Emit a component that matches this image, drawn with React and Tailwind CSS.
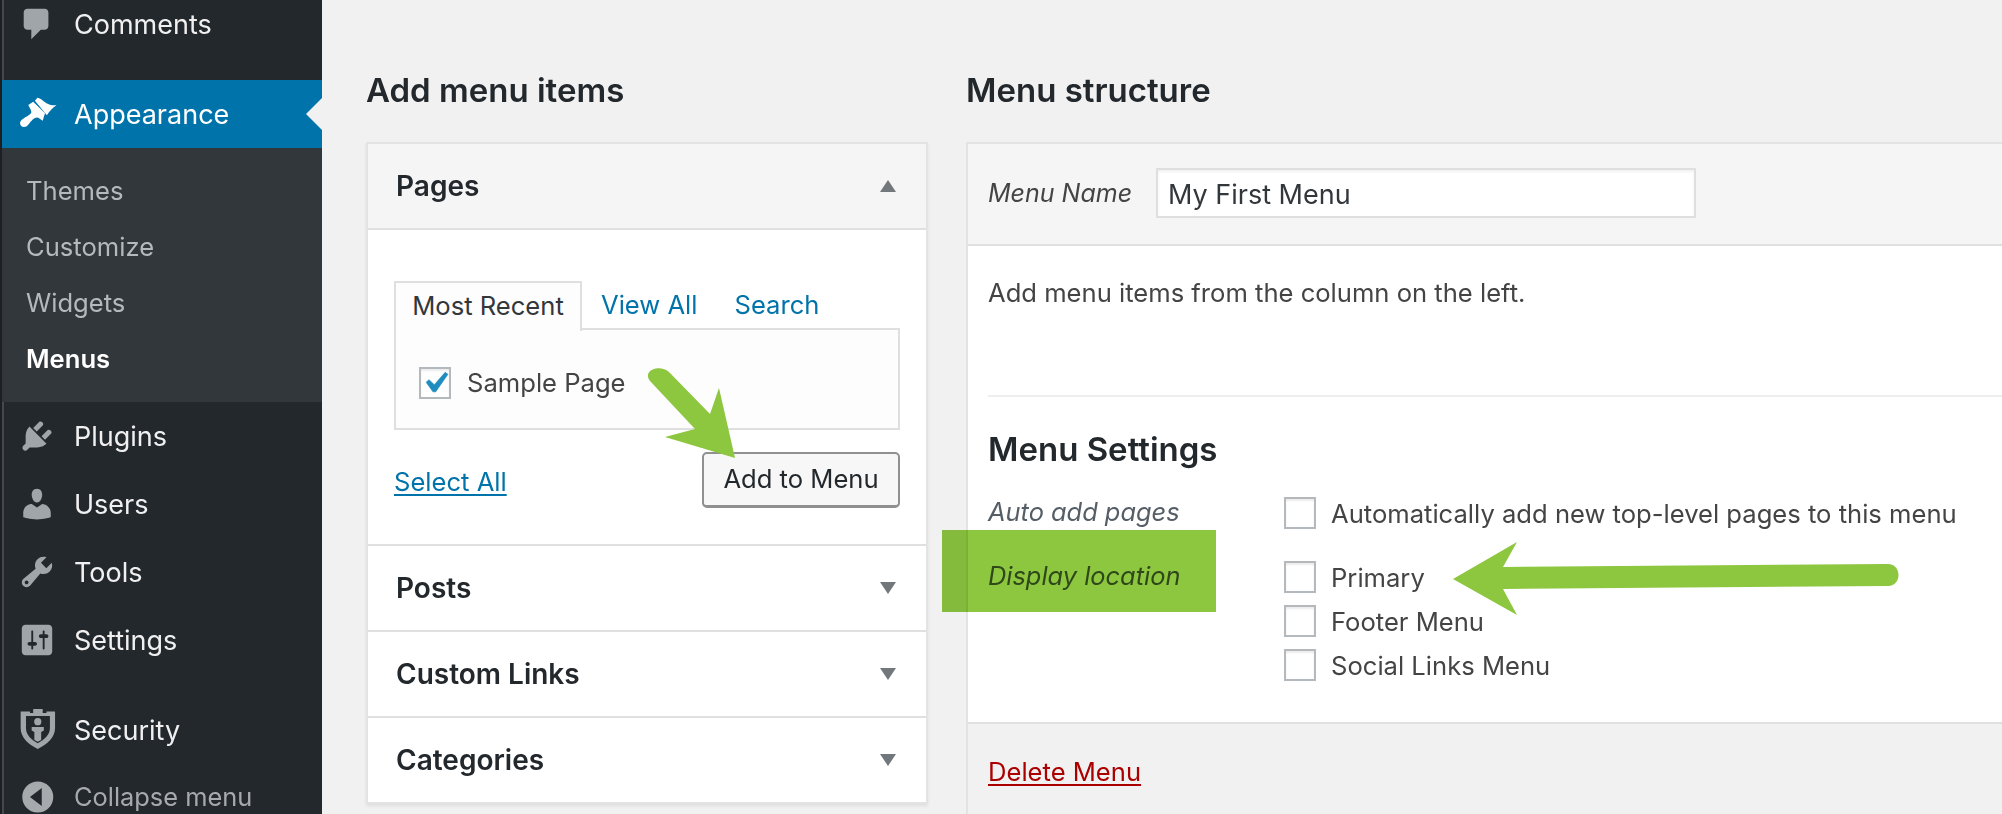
const font = "font-['Inter',sans-serif]";

const icons = {
  comments: "M5 2h9c1.1 0 2 .9 2 2v7c0 1.1-.9 2-2 2h-2l-5 5v-5H5c-1.1 0-2-.9-2-2V4c0-1.1.9-2 2-2z",
  appearance: "M5.4 5.3L8 3.5L14.2 9.6L13 13.5C11.5 12.5 11 11.8 10 11.8C8.5 11.8 7 13.5 5.5 15.5C4.5 17 2.5 17.2 1.6 16.2C.7 15.2 1 13.8 2.3 12.8C4 11.5 6.5 10.5 7 9.2C7.2 8.3 6.2 7 5.4 5.3ZM8.9 3L10.2 1.5C12 1.6 13 3.3 15 4.3C17 5.3 18.5 5.6 20.3 5.4C18.5 6.5 16.5 8.5 15.2 10.6Z",
  plugins: "M13.11 4.36L9.87 7.6 8 5.73l3.24-3.24c.35-.34 1.05-.2 1.56.32.52.51.66 1.21.31 1.55zm-8 1.77l.91-1.12 9.01 9.01-1.19.84c-.71.71-2.63 1.16-3.82 1.16H6.14L4.9 17.26c-.59.59-1.54.59-2.12 0-.59-.58-.59-1.53 0-2.12l1.24-1.24v-3.88c0-1.13.4-3.19 1.09-3.89zm7.26 3.97l3.24-3.24c.34-.35 1.04-.21 1.55.31.52.51.66 1.21.31 1.55l-3.24 3.25z",
  users: "M10 9.25c-2.27 0-2.73-3.44-2.73-3.44C7 4.02 7.82 2 9.97 2c2.16 0 2.98 2.02 2.71 3.81 0 0-.41 3.44-2.68 3.44zm0 2.57L12.72 10c2.39 0 4.52 2.33 4.52 4.53v2.49s-3.65 1.13-7.24 1.13c-3.65 0-7.24-1.13-7.24-1.13v-2.49c0-2.25 1.94-4.48 4.47-4.48z",
  tools: "M16.68 9.77c-1.34 1.34-3.3 1.67-4.95.99l-5.41 6.52c-.99.99-2.59.99-3.58 0s-.99-2.59 0-3.57l6.52-5.42c-.68-1.65-.35-3.61.99-4.95 1.28-1.28 3.12-1.62 4.72-1.06l-2.89 2.89 2.82 2.82 2.86-2.87c.53 1.58.18 3.39-1.08 4.65zM3.81 16.21c.4.39 1.04.39 1.43 0 .4-.4.4-1.04 0-1.43-.39-.4-1.03-.4-1.43 0-.39.39-.39 1.03 0 1.43z",
  settings: "M18 16V4c0-1.1-.9-2-2-2H4c-1.1 0-2 .9-2 2v12c0 1.1.9 2 2 2h12c1.1 0 2-.9 2-2zM8 11h1c.55 0 1 .45 1 1s-.45 1-1 1H8v1.5c0 .28-.22.5-.5.5s-.5-.22-.5-.5V13H6c-.55 0-1-.45-1-1s.45-1 1-1h1V5.5c0-.28.22-.5.5-.5s.5.22.5.5V11zm5-2h-1c-.55 0-1-.45-1-1s.45-1 1-1h1V5.5c0-.28.22-.5.5-.5s.5.22.5.5V7h1c.55 0 1 .45 1 1s-.45 1-1 1h-1v5.5c0 .28-.22.5-.5.5s-.5-.22-.5-.5V9z",
  security: "M1.4 .2H6.3V1.1H8V-1H13V1.1H15V.2H19.5V9C19.5 14 15.5 17.5 10.4 20C5.3 17.5 1.4 14 1.4 9ZM4.2 2.6H16.8V9C16.8 12.5 14 15 10.4 17C6.8 15 4.2 12.5 4.2 9ZM10.4 3.7a1.9 1.9 0 1 1 0 3.8a1.9 1.9 0 0 1 0-3.8ZM7.2 8.4H13.6V10.2L12.2 11V15.2L10.4 16.2L8.6 15.2V11L7.2 10.2Z",
  collapse: "M10.4 1.84a8.16 8.16 0 1 0 0 16.32a8.16 8.16 0 0 0 0-16.32ZM12.5 5.3V14.7L6.3 10Z",
};

const MenuIcon = ({ name, className }) => (
  <svg viewBox="0 0 20 20" className={`overflow-visible ${className}`} fill="currentColor" fillRule="evenodd">
    <path d={icons[name]} />
  </svg>
);

const MenuRow = ({ icon, label }) => (
  <div className="flex h-[68px] shrink-0 items-center pl-[16px] text-[#f0f0f1]">
    <MenuIcon name={icon} className="h-[38px] w-[38px] shrink-0 text-[#a0a5aa]" />
    <span className="ml-[18px] pt-[2px] text-[27px]">{label}</span>
  </div>
);

const Sidebar = () => (
  <aside className="flex h-[814px] w-[322px] shrink-0 flex-col overflow-hidden border-l-[2px] border-[#1e1f22] bg-[#23282d] shadow-[inset_2px_0_0_#45494e]">
    <div className="-mt-[10px] mb-[22px]">
      <MenuRow icon="comments" label="Comments" />
    </div>
    <div className="relative flex h-[68px] shrink-0 items-center bg-[#0073aa] pl-[16px] text-white">
      <MenuIcon name="appearance" className="h-[38px] w-[38px] shrink-0" />
      <span className="ml-[18px] pt-[2px] text-[27px]">Appearance</span>
      <div className="absolute right-0 top-[18px] h-0 w-0 border-y-[16px] border-r-[16px] border-y-transparent border-r-[#f1f1f1]" />
    </div>
    <div className="flex flex-col bg-[#32373c] py-[15px] pl-[24px] text-[25.6px] text-[#b4b9be]">
      <div className="flex h-[56px] items-center">Themes</div>
      <div className="flex h-[56px] items-center">Customize</div>
      <div className="flex h-[56px] items-center">Widgets</div>
      <div className="flex h-[56px] items-center font-semibold text-white">Menus</div>
    </div>
    <MenuRow icon="plugins" label="Plugins" />
    <MenuRow icon="users" label="Users" />
    <MenuRow icon="tools" label="Tools" />
    <MenuRow icon="settings" label="Settings" />
    <div className="mt-[22px]">
      <MenuRow icon="security" label="Security" />
    </div>
    <div className="-mt-px flex h-[68px] shrink-0 items-center pl-[16px] text-[#a7aaad]">
      <MenuIcon name="collapse" className="h-[38px] w-[38px] shrink-0" />
      <span className="ml-[18px] text-[25.4px]">Collapse menu</span>
    </div>
  </aside>
);

const Caret = ({ up }) => (
  <div className={`h-0 w-0 border-x-[8px] border-x-transparent ${up ? 'border-b-[12px] border-b-[#72777c]' : 'border-t-[12px] border-t-[#72777c]'}`} />
);

const Accordion = ({ title }) => (
  <div className="flex h-[86px] items-center justify-between border-t-2 border-[#e0e0e0] pl-[28px] pr-[30px]">
    <h3 className="text-[28px] font-semibold text-[#23282d]">{title}</h3>
    <Caret />
  </div>
);

const Checkbox = ({ checked }) => (
  <div className="relative flex h-[32px] w-[32px] shrink-0 items-center justify-center border-2 border-[#b4b9be] bg-white shadow-[inset_0_2px_2px_rgba(0,0,0,0.08)]">
    {checked && (
      <svg viewBox="0 0 20 20" className="h-[42px] w-[42px] shrink-0 text-[#1e8cbe]" fill="currentColor" stroke="currentColor" strokeWidth="0.3">
        <path d="M14.83 4.89l1.34.94-5.81 8.38H9.02L5.78 9.67l1.34-1.25 2.57 2.4z" />
      </svg>
    )}
  </div>
);

const AddItems = () => (
  <section className="w-[562px] shrink-0">
    <h2 className="mb-[34px] mt-[72px] h-[36px] text-[33px] font-semibold leading-[36px] text-[#23282d]">Add menu items</h2>
    <div className="border-2 border-[#e3e3e3] bg-white shadow-[0_2px_3px_rgba(0,0,0,0.08)]">
      <div className="flex h-[84px] items-center justify-between bg-[#f5f5f5] pl-[28px] pr-[30px]">
        <h3 className="text-[28px] font-semibold text-[#23282d]">Pages</h3>
        <Caret up />
      </div>
      <div className="h-[316px] border-t-2 border-[#e0e0e0] pl-[26px] pr-[26px] pt-[50px]">
        <div className="flex h-[50px] items-center text-[25.6px]">
          <div className="relative z-10 -mb-px flex h-[50px] w-[188px] items-center justify-center border-2 border-b-0 border-[#dfdfdf] bg-[#fdfdfd] text-[#32373c]">Most Recent</div>
          <a className="ml-[19px] text-[#0073aa]">View All</a>
          <a className="ml-[37px] text-[#0073aa]">Search</a>
        </div>
        <div className="-mt-[2px] flex h-[102px] items-center gap-[16px] border-2 border-[#dfdfdf] bg-[#fdfdfd] pl-[23px] pt-[8px] text-[25.6px] text-[#444]">
          <Checkbox checked />
          Sample Page
        </div>
        <div className="mt-[22px] flex items-center justify-between">
          <a className="pt-[4px] text-[25.6px] text-[#0073aa] underline underline-offset-[3px]">Select All</a>
          <button className="h-[56px] w-[198px] rounded-[5px] border-2 border-b-[3px] border-[#909090] bg-[#f7f7f7] text-[25.6px] text-[#23282d]">Add to Menu</button>
        </div>
      </div>
      <Accordion title="Posts" />
      <Accordion title="Custom Links" />
      <Accordion title="Categories" />
    </div>
  </section>
);

const LocationRow = ({ label, className = '' }) => (
  <div className={`flex h-[44px] items-center gap-[15px] text-[25.6px] text-[#444] ${className}`}>
    <Checkbox />
    <span className="pt-[3px]">{label}</span>
  </div>
);

const MenuStructure = () => (
  <section className="ml-[38px] min-w-0 flex-1">
    <h2 className="mb-[34px] mt-[72px] h-[36px] text-[33px] font-semibold leading-[36px] text-[#23282d]">Menu structure</h2>
    <div className="border-l-2 border-t-2 border-[#e3e3e3] bg-white">
      <div className="flex h-[100px] items-center bg-[#f5f5f5] pb-[2px] pl-[20px]">
        <span className="w-[168px] pt-[2px] text-[25px] italic text-[#444]">Menu Name</span>
        <input
          readOnly
          value="My First Menu"
          className="h-[50px] w-[540px] border-2 border-[#dfdfdf] bg-white px-[10px] pt-[2px] text-[27px] text-[#32373c] shadow-[inset_0_2px_3px_rgba(0,0,0,0.06)]"
        />
      </div>
      <div className="h-[478px] border-t-2 border-[#e0e0e0] pl-[20px]">
        <p className="pt-[32px] text-[25.6px] leading-[30px] text-[#444]">Add menu items from the column on the left.</p>
        <div className="mt-[87px] h-[2px] bg-[#eeeeee]" />
        <h3 className="mt-[34px] h-[36px] text-[33px] font-semibold leading-[36px] text-[#23282d]">Menu Settings</h3>
        <div className="mt-[24px] flex">
          <div className="w-[296px] shrink-0 text-[25.4px] italic text-[#555d66]">
            <div className="flex h-[70px] items-start pt-[2px]">Auto add pages</div>
            <div className="leading-[30px]">Display location</div>
          </div>
          <div>
            <LocationRow label="Automatically add new top-level pages to this menu" className="mb-[20px]" />
            <LocationRow label="Primary" />
            <LocationRow label="Footer Menu" />
            <LocationRow label="Social Links Menu" />
          </div>
        </div>
      </div>
      <div className="h-[100px] border-t-2 border-[#e0e0e0] bg-[#f1f1f1] pl-[20px] pt-[33px]">
        <a className="text-[25.6px] leading-[30px] text-[#a00] underline underline-offset-[3px]">Delete Menu</a>
      </div>
    </div>
  </section>
);

export default function App() {
  return (
    <div className={`relative flex h-[814px] w-[2002px] overflow-hidden bg-[#f1f1f1] ${font}`}>
      <Sidebar />
      <main className="ml-[44px] flex min-w-0 flex-1">
        <AddItems />
        <MenuStructure />
      </main>
      <div className="absolute left-[942px] top-[530px] h-[82px] w-[274px] bg-[#8dc63f] mix-blend-multiply" />
      <svg className="absolute left-0 top-0 h-[814px] w-[2002px]" viewBox="0 0 2002 814" fill="#8dc63f">
        <path d="M1453 579L1517 542L1503 567L1888 564C1902 564 1902 586 1888 586L1503 589L1517 615Z" />
        <path d="M735 458L665 437L695 429L650 381C642 370 660 364 669 372L710 414L719 388Z" />
      </svg>
    </div>
  );
}
